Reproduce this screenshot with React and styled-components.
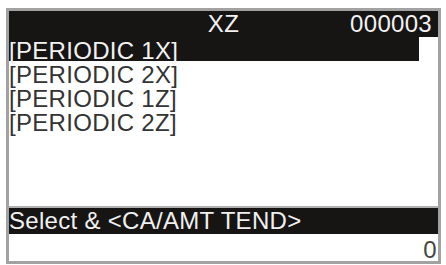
import React from 'react';
import styled, { createGlobalStyle } from 'styled-components';

const GlobalStyle = createGlobalStyle`
  html, body {
    margin: 0;
    padding: 0;
    background: #ffffff;
  }
  body {
    font-family: 'Liberation Sans', Arial, sans-serif;
  }
`;

const items = [
  '[PERIODIC 1X]',
  '[PERIODIC 2X]',
  '[PERIODIC 1Z]',
  '[PERIODIC 2Z]',
];

const App = () => {
  const selected = 0;

  return (
    <>
      <GlobalStyle />
      <Screen>
        <Header>
          <Title>XZ</Title>
          <Counter>000003</Counter>
        </Header>
        <List>
          {items.map((label, i) => (
            <Row key={label} active={i === selected}>{label}</Row>
          ))}
        </List>
        <StatusBar>Select &amp; &lt;CA/AMT TEND&gt;</StatusBar>
        <InputRow>0</InputRow>
      </Screen>
    </>
  );
};

export default App;

const Screen = styled.div`
  display: flex;
  flex-direction: column;
  box-sizing: border-box;
  width: 435px;
  height: 256px;
  margin: 8px 0 0 6px;
  border: 3px solid #a2a2a2;
  background: #ffffff;
  font-family: 'Liberation Sans', Arial, sans-serif;
  font-size: 24px;
  letter-spacing: 0.3px;
`;

const Header = styled.div`
  position: relative;
  display: flex;
  justify-content: flex-end;
  height: 26px;
  line-height: 26px;
  padding-right: 6px;
  background: #171414;
  color: #f2f2f2;
`;

const Title = styled.span`
  position: absolute;
  left: 0;
  right: 0;
  text-align: center;
`;

const Counter = styled.span`
  position: relative;
`;

const List = styled.div`
  flex: 1;
  display: flex;
  flex-direction: column;
  padding-right: 19px;
`;

const Row = styled.div`
  box-sizing: border-box;
  height: 24px;
  padding-top: 4px;
  line-height: 20px;
  white-space: nowrap;
  background: ${p => (p.active ? '#171414' : 'transparent')};
  color: ${p => (p.active ? '#f2f2f2' : '#333333')};
`;

const StatusBar = styled.div`
  height: 26px;
  line-height: 26px;
  border-top: 2px solid #b0b0b0;
  background: #171414;
  color: #f0f0f0;
  white-space: nowrap;
`;

const InputRow = styled.div`
  box-sizing: border-box;
  height: 27px;
  padding: 4px 1px 0 0;
  line-height: 24px;
  text-align: right;
  color: #444444;
`;
